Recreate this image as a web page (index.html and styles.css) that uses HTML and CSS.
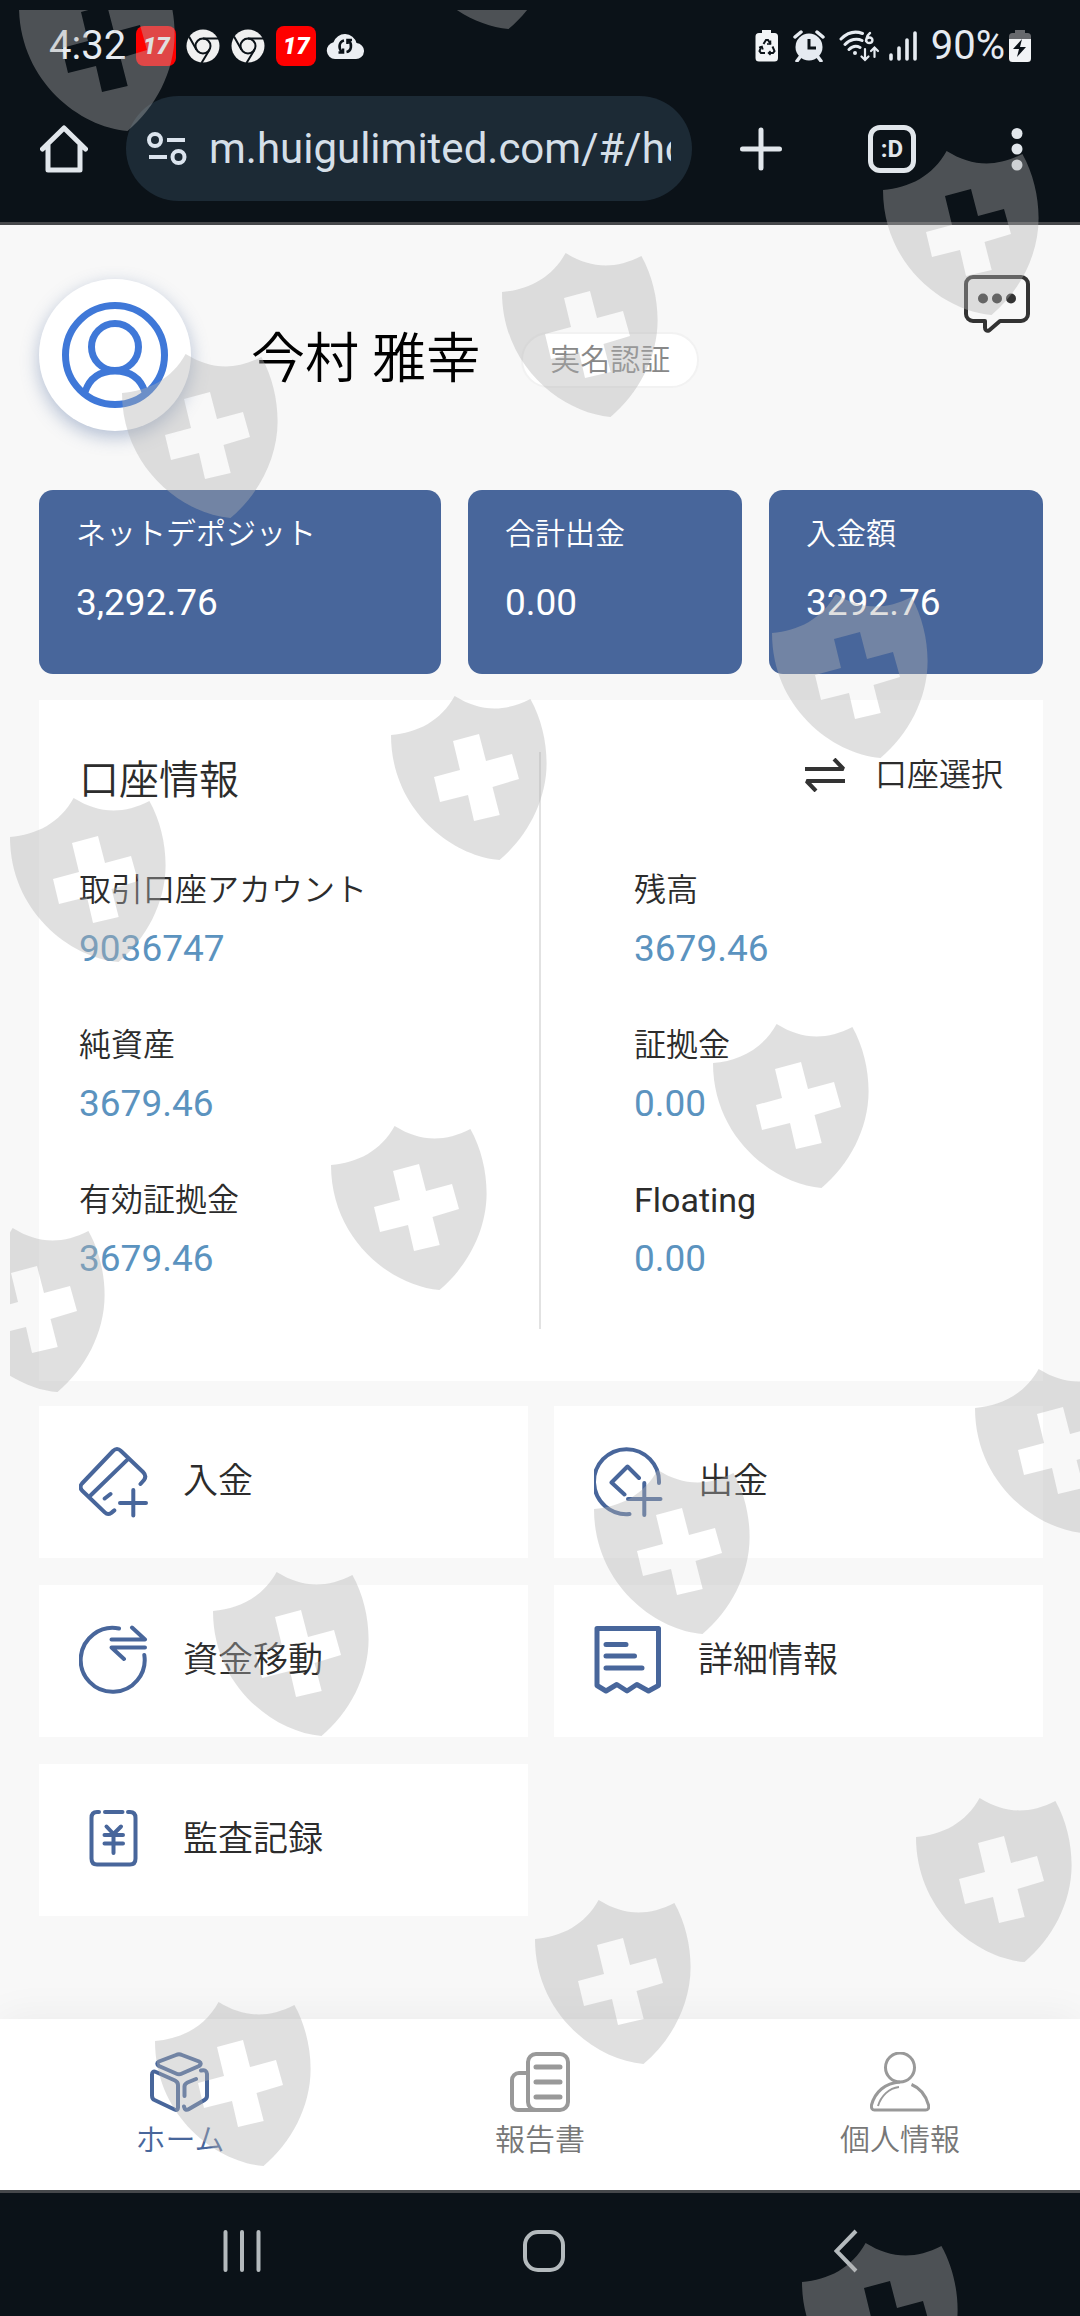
FILE: index.html
```html
<!DOCTYPE html>
<html lang="ja">
<head>
<meta charset="utf-8">
<meta name="viewport" content="width=device-width, initial-scale=1">
<title>ホーム</title>
<link rel="stylesheet" href="styles.css">
</head>
<body>
<header class="chrome">
  <div class="status">
    <div class="status-left">
      <span class="clock">4:32</span>
      <span class="app-badge">17</span>
      <svg class="status-icon" width="35" height="34" viewBox="0 0 35 34"><use href="#chrome-logo"/></svg>
      <svg class="status-icon" width="35" height="34" viewBox="0 0 35 34"><use href="#chrome-logo"/></svg>
      <span class="app-badge">17</span>
      <svg width="38" height="28" viewBox="0 0 38 28"><path d="M9 27a8.500 8.500 0 0 1-1.500-16.800A12 12 0 0 1 30.500 11A8 8 0 0 1 29.500 27Z" fill="#eceff3"/><g fill="none" stroke="#0b1218" stroke-width="2.600"><path d="M18 8.500c-5 1-6 8-2 11.500M20.500 20c5-1 6-8 2-11.500"/><path d="M12.500 20.500h4.500v-4M26 8h-4.500v4"/></g></svg>
    </div>
    <div class="status-right">
      <svg width="24" height="34" viewBox="0 0 24 34"><path d="M7 1h9v3h3.500a3.500 3.500 0 0 1 3.500 3.500v21.500a3.500 3.500 0 0 1-3.500 3.500h-15.500a3.500 3.500 0 0 1-3.500-3.500v-21.500a3.500 3.500 0 0 1 3.500-3.500h3Z" fill="#f2f4f6"/><g fill="none" stroke="#0b1218" stroke-width="2"><path d="M8.500 15l2.500-4h2l2.500 4M17.500 17.500l2 4.500-1.500 2h-4M10 24h-4l-1.500-2 2-4.500"/><path d="M15.500 11.500v3.500h-3.500M15.500 22l-2 2 2 2M4 18.500l3-1 1 3" stroke-width="1.500"/></g></svg>
      <svg width="32" height="32" viewBox="0 0 32 32"><circle cx="16" cy="17" r="13.500" fill="#e6ebf1"/><path d="M2 7l6-5M30 7l-6-5M7 27l-3 4M25 27l3 4" stroke="#e6ebf1" stroke-width="3.500" stroke-linecap="round"/><path d="M16 9v9h7" fill="none" stroke="#0b1218" stroke-width="3"/></svg>
      <svg width="78" height="32" viewBox="0 0 78 32"><g fill="none" stroke="#e6ebf1" stroke-width="3" stroke-linecap="round"><path d="M2 9C9 2 17 1 23.500 3.500M6 14.500C11 9 18 8 23 10.500M10 19.500C13.500 16 17.500 15.500 21 17.500"/><path d="M31 3c-4 3-5.500 10-1 10 4.500 0 4.500-5.500.5-5.500-2 0-3.500 1.500-3.500 3.500" stroke-width="2.400"/><path d="M26 19v10.500M22.500 26.500l3.500 3.500 3.500-3.500M35.500 27v-9.500M32 21l3.500-3.500 3.500 3.500" stroke-width="2.200"/></g><circle cx="16" cy="23" r="2" fill="#e6ebf1"/><path d="M52 25v4M60 18v11M68 10v19M76 3v26" stroke="#e6ebf1" stroke-width="3.600" stroke-linecap="round"/></svg>
      <span class="battery">90%<svg width="22" height="34" viewBox="0 0 22 34"><path d="M6 1h10v3h2.500a3.500 3.500 0 0 1 3.500 3.500v3h-22v-3a3.500 3.500 0 0 1 3.500-3.500h2.500Z" fill="#67696d"/><path d="M0 10h22v19.500a3.500 3.500 0 0 1-3.500 3.500h-15a3.500 3.500 0 0 1-3.500-3.500Z" fill="#f2f4f6"/><path d="M13 10l-9 10h6l-2 8 9-10h-6l2-8Z" fill="#0b1218"/></svg></span>
    </div>
  </div>
  <div class="toolbar">
    <button class="icon-btn" type="button" aria-label="ホームページ"><svg width="48" height="48" viewBox="0 0 48 48"><path d="M2.500 24L24 3l21.500 21M8 20v25h32v-25" fill="none" stroke="#e1e6eb" stroke-width="5" stroke-linecap="round" stroke-linejoin="round"/></svg></button>
    <div class="address">
      <svg width="40" height="34" viewBox="0 0 40 34"><g fill="none" stroke="#dbe4ee" stroke-width="4"><circle cx="8" cy="8" r="6"/><circle cx="31.500" cy="25" r="6"/><path d="M20 8h18M2 25h18"/></g></svg>
      <input class="url" type="text" aria-label="アドレス" value="m.huigulimited.com/#/home">
    </div>
    <div class="actions">
      <button class="icon-btn" type="button" aria-label="新しいタブ"><svg width="42" height="44" viewBox="0 0 42 44"><path d="M21 3v38M2.500 22h37" stroke="#e1e6eb" stroke-width="5" stroke-linecap="round"/></svg></button>
      <button class="tabs" type="button">:D</button>
      <button class="icon-btn" type="button" aria-label="メニュー"><svg width="30" height="44" viewBox="0 0 30 44"><g fill="#e1e6eb"><circle cx="15" cy="6.500" r="5.500"/><circle cx="15" cy="22" r="5.500"/><circle cx="15" cy="38" r="5.500"/></g></svg></button>
    </div>
  </div>
</header>

<main class="page">
  <section class="profile">
    <div class="avatar"><svg width="152" height="152" viewBox="0 0 152 152"><g fill="none" stroke="#3f78d8" stroke-width="7"><circle cx="76" cy="76" r="49.500"/><circle cx="76" cy="68" r="23.500"/><path d="M46 113C51 98 62 92 76 92s25 6 30 21"/></g></svg></div>
    <div class="identity">
      <h1 class="name">今村 雅幸</h1>
      <span class="badge">実名認証</span>
    </div>
    <button class="icon-btn chat" type="button" aria-label="メッセージ"><svg width="66" height="58" viewBox="0 0 66 58"><path d="M9 2h48a7 7 0 0 1 7 7v30a7 7 0 0 1-7 7h-21l-11 9.500q-4 1-4-3v-6.500h-12a7 7 0 0 1-7-7v-30a7 7 0 0 1 7-7Z" fill="none" stroke="#333" stroke-width="4" stroke-linejoin="round"/><g fill="#333"><circle cx="19" cy="23.500" r="5"/><circle cx="33" cy="23.500" r="5"/><circle cx="47" cy="23.500" r="5"/></g></svg></button>
  </section>

  <section class="totals">
    <div class="total"><span class="total-label">ネットデポジット</span><span class="num">3,292.76</span></div>
    <div class="total"><span class="total-label">合計出金</span><span class="num">0.00</span></div>
    <div class="total"><span class="total-label">入金額</span><span class="num">3292.76</span></div>
  </section>

  <section class="account">
    <div class="account-col account-left">
      <div class="account-head"><h2 class="account-title">口座情報</h2></div>
      <dl class="facts">
        <div><dt>取引口座アカウント</dt><dd class="num">9036747</dd></div>
        <div><dt>純資産</dt><dd class="num">3679.46</dd></div>
        <div><dt>有効証拠金</dt><dd class="num">3679.46</dd></div>
      </dl>
    </div>
    <div class="account-col account-right">
      <div class="account-head account-head-right"><button class="switch" type="button"><svg width="40" height="34" viewBox="0 0 40 34"><path d="M0 11h38.500L29 1M40 23H1.500L11 33" fill="none" stroke="#333" stroke-width="4" stroke-linejoin="bevel"/></svg>口座選択</button></div>
      <dl class="facts">
        <div><dt>残高</dt><dd class="num">3679.46</dd></div>
        <div><dt>証拠金</dt><dd class="num">0.00</dd></div>
        <div><dt class="latin">Floating</dt><dd class="num">0.00</dd></div>
      </dl>
    </div>
  </section>

  <section class="tiles">
    <a class="tile" href="#"><svg class="tile-icon" viewBox="0 0 70 72"><path d="M47.700 14.400L12 49M35.300 64.400l-3 2.500q-3.500 2.500-6.500-.5L3 44.500q-3-3.500 0-7L34 5q4-4 8 0L64 26q4 4 1 8l-3.500 4M31.500 48l-5.800 4.500M41 57h26M54.300 44v25.500"/></svg>入金</a>
    <a class="tile" href="#"><svg class="tile-icon" viewBox="0 0 70 72"><path d="M35.500 68A32.500 32.500 0 1 1 65 37M45 32L33.500 20.500 17.500 36.500 30.500 48.500M34 53h32.500M50.300 37v32"/></svg>出金</a>
    <a class="tile" href="#"><svg class="tile-icon" viewBox="0 0 70 72"><path d="M40 3.500A32 32 0 1 0 65.300 30M53 2.500L66 14.500H32.500M66 22.500H32.500L45 34"/></svg>資金移動</a>
    <a class="tile" href="#"><svg class="tile-icon tile-icon-receipt" viewBox="0 0 70 72"><path d="M3 3.500H64.500V60.500L54.500 66 42.800 59.500 33 66 22.800 59.500 12 66 3 60.500ZM12 19.500h20M12 31h28.500M12 43h36"/></svg>詳細情報</a>
    <a class="tile" href="#"><svg class="tile-icon" viewBox="0 0 70 72"><path d="M20 8h-2q-5.500 0-5.500 6v40.500q0 6 5.500 6h33q5.500 0 5.500-6v-40.500q0-6-5.500-6h-2M26 8h17.500M27.500 22.500l7 7.500 7.500-7.500M34.500 30v19M25.500 31h18.500M25.500 39.500h18.500"/></svg>監査記録</a>
  </section>
</main>

<nav class="tabbar">
  <a class="tab tab-active" href="#"><svg width="60" height="60" viewBox="0 0 60 60"><path d="M26 3q3-1.500 6 0L49 9.500q3.500 2 0 4.500L32 21.500q-3 1.500-6 0L9 14q-3.500-2.500 0-4.500ZM2 22.500q0-4 4-2.500L25 28.500q3 1.500 3 4.500V55.500q0 3.500-3.500 2L4.500 48Q2 47 2 43.500ZM51 18.500q5.500-1.500 6 3.500v22q0 2.500-2.500 4L39 57q-4 2.500-5-2.500M46 27l-8.500 3.500q-3 1.500-3 4V44"/></svg>ホーム</a>
  <a class="tab" href="#"><svg width="60" height="60" viewBox="0 0 60 60"><rect x="18" y="2" width="40" height="56" rx="8"/><path d="M18 21h-9a7 7 0 0 0-7 7v24a6 6 0 0 0 6 6h18"/><path d="M26 15h24M26 30h24M26 45h24" stroke-linecap="round" stroke-width="5"/></svg>報告書</a>
  <a class="tab" href="#"><svg width="60" height="60" viewBox="0 0 60 60"><g class="thin"><circle cx="30" cy="15.500" r="14.500"/><path d="M30 30C15 31 5 40 1.500 53q-.5 5 3 5h51q4 0 3-5C56 44 50 36 41.500 32.500"/></g><path d="M29 35C19 36 11 44 8 54" stroke-width="2"/></svg>個人情報</a>
</nav>

<footer class="sysnav">
  <button class="icon-btn" type="button" aria-label="履歴"><svg width="42" height="44" viewBox="0 0 42 44"><path d="M4.500 3v38M21 3v38M37.500 3v38" stroke="#b4babd" stroke-width="4" stroke-linecap="round"/></svg></button>
  <button class="icon-btn" type="button" aria-label="ホーム画面"><svg width="44" height="44" viewBox="0 0 44 44"><rect x="3" y="3" width="38" height="38" rx="13" fill="none" stroke="#b4babd" stroke-width="4"/></svg></button>
  <button class="icon-btn" type="button" aria-label="戻る"><svg width="24" height="44" viewBox="0 0 24 44"><path d="M22 2L2.500 22 22 42" fill="none" stroke="#b4babd" stroke-width="4"/></svg></button>
</footer>

<svg class="watermark" aria-hidden="true">
  <defs>
    <g id="chrome-logo">
      <circle cx="17" cy="17" r="16.500" fill="#f0f0f0"/>
      <circle cx="17" cy="17" r="7.500" fill="none" stroke="#0b1218" stroke-width="2"/>
      <path d="M17 9.500H33M10.500 20.800L3 7.500M23.500 20.800L15.500 34" stroke="#0b1218" stroke-width="2"/>
    </g>
    <path id="shield" fill-rule="evenodd" d="M0 39C26 37 50 25 63.600 0C88 15 112 17 139.400 3C150 22 155.600 45 155.600 67C155.600 105 136 141 108.500 164C60 160 0 113 0 39ZM62 45L69 74 43 81 49 106 77 99 83 125 108.700 119 101.500 91 128 83 121 58 95 65 88 38Z"/>
  </defs>
  <g fill="#b2b2b2" fill-opacity=".4">
    <use href="#shield" x="9" y="-43"/>
    <use href="#shield" x="390" y="-145"/>
    <use href="#shield" x="873" y="141"/>
    <use href="#shield" x="492" y="243"/>
    <use href="#shield" x="112" y="344"/>
    <use href="#shield" x="762" y="584"/>
    <use href="#shield" x="381" y="686"/>
    <use href="#shield" x="0" y="788"/>
    <use href="#shield" x="703" y="1014"/>
    <use href="#shield" x="321" y="1116"/>
    <use href="#shield" x="-61" y="1218"/>
    <use href="#shield" x="965" y="1359"/>
    <use href="#shield" x="584" y="1460"/>
    <use href="#shield" x="203" y="1562"/>
    <use href="#shield" x="906" y="1788"/>
    <use href="#shield" x="525" y="1890"/>
    <use href="#shield" x="145" y="1992"/>
    <use href="#shield" x="792" y="2233"/>
  </g>
</svg>
</body>
</html>
```
FILE: styles.css
```css
* { box-sizing: border-box; }

body {
  position: relative;
  display: flex;
  flex-direction: column;
  min-height: 100vh;
  margin: 0;
  background: #f8f8f8;
  color: #2c2c2c;
  font-family: Roboto, "Noto Sans CJK JP DemiLight", "Noto Sans CJK JP", sans-serif;
  font-weight: 350;
}

svg { display: block; flex: none; }
h1, h2, dl, dd { margin: 0; font-weight: inherit; }
a { color: inherit; text-decoration: none; }
button { padding: 0; border: 0; background: none; color: inherit; font: inherit; }

/* Phone status bar and browser toolbar */
.chrome {
  padding-bottom: 21px;
  border-bottom: 3px solid #46484b;
  background: #0b1218;
}

.status {
  display: flex;
  justify-content: space-between;
  padding: 26px 49px 30px;
  color: #e6ebf1;
  font-size: 40px;
  font-weight: 400;
  line-height: 40px;
}

.status-left { display: flex; align-items: center; gap: 10px; }
.status-right { display: flex; align-items: center; gap: 14px; }
.battery { display: flex; align-items: center; gap: 4px; }

.app-badge {
  width: 40px;
  border-radius: 8px;
  background: #f00;
  color: #fff;
  font-size: 24px;
  font-style: italic;
  font-weight: 900;
  text-align: center;
}

.toolbar {
  display: flex;
  align-items: center;
  gap: 38px;
  padding: 0 48px 0 40px;
}

.address {
  display: flex;
  flex: 1;
  align-items: center;
  gap: 22px;
  min-width: 0;
  height: 105px;
  padding: 0 21px;
  border-radius: 53px;
  background: #1c2a35;
}

.url {
  flex: 1;
  min-width: 0;
  padding: 0;
  border: 0;
  outline: 0;
  background: none;
  color: #d5dfe8;
  font: 400 42px/56px Roboto, sans-serif;
}

.actions { display: flex; align-items: center; gap: 86px; margin-left: 10px; }

.tabs {
  width: 48px;
  height: 48px;
  border: 5px solid #e1e6eb;
  border-radius: 12px;
  color: #e1e6eb;
  font-size: 24px;
  font-weight: 700;
  line-height: 36px;
}

/* Page */
.page {
  flex: 1;
  padding: 50px 37px 50px 39px;
}

.profile { display: flex; align-items: center; height: 160px; }

.avatar {
  width: 152px;
  height: 152px;
  border-radius: 50%;
  background: #fff;
  box-shadow: 0 6px 18px rgba(72, 102, 155, .4);
}

.identity {
  display: flex;
  align-items: center;
  gap: 41px;
  margin-left: 60px;
  padding-top: 10px;
}

.name {
  color: #000;
  font-size: 54px;
  line-height: 72px;
}

.badge {
  padding: 0 27px;
  border: 2px solid #f2f2f2;
  border-radius: 28px;
  background: #fff;
  color: #888;
  font-size: 30px;
  line-height: 52px;
}

.chat { align-self: flex-start; margin: 0 13px 0 auto; }

.totals {
  display: grid;
  grid-template-columns: 22fr 15fr 15fr;
  gap: 27px;
  margin-top: 55px;
}

.total {
  display: flex;
  flex-direction: column;
  gap: 24px;
  padding: 22px 37px 48px;
  border-radius: 14px;
  background: #48669b;
  color: #fff;
  font-size: 30px;
  line-height: 44px;
}

.num { font-size: 37px; font-weight: 400; line-height: 46px; }

.account {
  display: grid;
  grid-template-columns: 1fr 1fr;
  margin-top: 26px;
  padding: 52px 0;
  background: #fff;
}

.account-col { padding-bottom: 47px; }
.account-left { padding-left: 40px; border-right: 2px solid #e2e2e2; }
.account-right { padding-right: 40px; padding-left: 93px; }
.account-head { display: flex; height: 56px; margin-bottom: 60px; }
.account-head-right { justify-content: flex-end; align-items: flex-start; }
.account-title { font-size: 40px; line-height: 58px; }

.switch {
  display: flex;
  align-items: center;
  gap: 30px;
  font-size: 32px;
  line-height: 46px;
}

.facts { display: flex; flex-direction: column; gap: 51px; }
.facts dt { margin-bottom: 14px; font-size: 32px; line-height: 44px; }
.facts dt.latin { font-size: 34px; font-weight: 400; }
.facts dd { color: #5b93bf; }

.tiles {
  display: grid;
  grid-template-columns: 1fr 1fr;
  gap: 27px 26px;
  margin-top: 25px;
}

.tile {
  display: flex;
  align-items: center;
  gap: 34px;
  padding: 40px;
  background: #fff;
  font-size: 35px;
  line-height: 44px;
}

.tile-icon {
  width: 70px;
  height: 72px;
  fill: none;
  stroke: #48669b;
  stroke-width: 4px;
  stroke-linecap: round;
  stroke-linejoin: round;
}

.tile-icon-receipt { stroke-width: 5px; }

/* Bottom tabs */
.tabbar {
  display: grid;
  grid-template-columns: repeat(3, 1fr);
  padding: 33px 0 30px;
  background: #fff;
  box-shadow: 0 0 40px rgba(0, 0, 0, .06);
}

.tab {
  display: flex;
  flex-direction: column;
  align-items: center;
  gap: 8px;
  color: #777;
  font-size: 30px;
  line-height: 40px;
}

.tab svg { fill: none; stroke: #999; stroke-width: 4px; }
.tab .thin { stroke-width: 3px; }
.tab-active { color: #48669b; }
.tab-active svg { stroke: #48669b; stroke-linecap: round; }

.sysnav {
  display: grid;
  grid-template-columns: repeat(3, 1fr);
  justify-items: center;
  padding: 36px 83px 43px 91px;
  border-top: 3px solid #46484b;
  background: #0b1218;
}

/* Shield marks laid over the whole page */
.watermark {
  position: absolute;
  top: 10px;
  left: 10px;
  width: calc(100% - 10px);
  height: calc(100% - 10px);
  pointer-events: none;
}
```
